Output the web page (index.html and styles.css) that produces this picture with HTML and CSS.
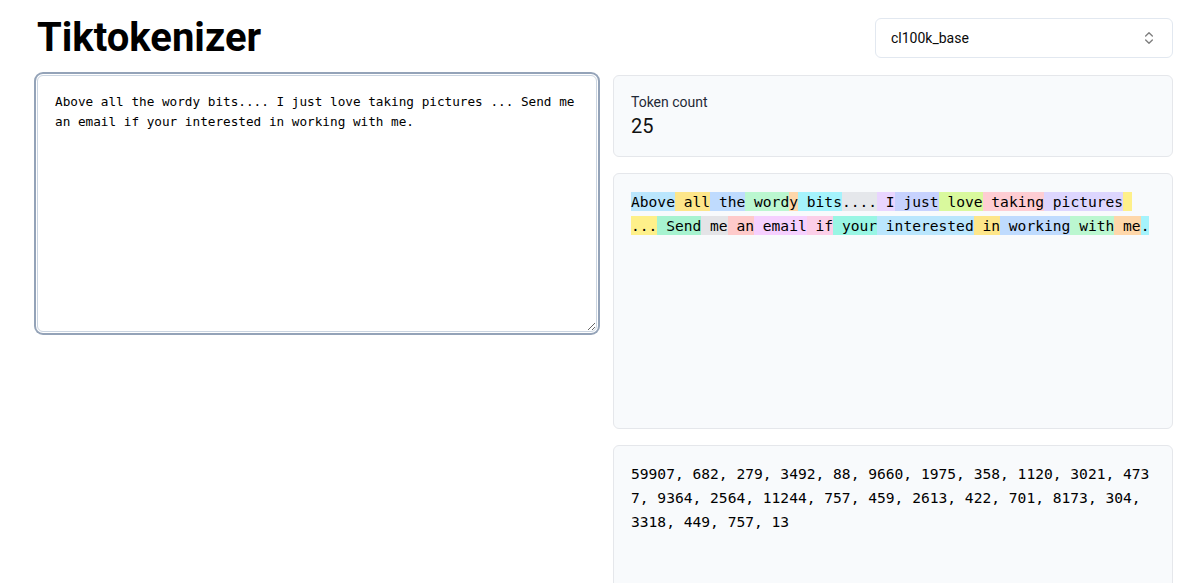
FILE: index.html
```html
<!DOCTYPE html>
<html lang="en">
<head>
<meta charset="utf-8">
<title>Tiktokenizer</title>
<link rel="stylesheet" href="styles.css">
</head>
<body>
<div class="page">
  <header class="header">
    <h1 class="title">Tiktokenizer</h1>
    <div class="select">
      <span>cl100k_base</span>
      <svg class="chev" viewBox="0 0 24 24" fill="none" stroke="currentColor" stroke-width="2" stroke-linecap="round" stroke-linejoin="round"><path d="m7 15 5 5 5-5"/><path d="m7 9 5-5 5 5"/></svg>
    </div>
  </header>
  <main class="main">
    <div class="left">
      <textarea class="input">Above all the wordy bits.... I just love taking pictures ... Send me an email if your interested in working with me.</textarea>
    </div>
    <div class="side">
      <section class="panel">
        <div class="label">Token count</div>
        <div class="count">25</div>
      </section>
      <section class="panel tokens"><span class="t c0">Above</span><span class="t c1"> all</span><span class="t c2"> the</span><span class="t c3"> word</span><span class="t c4">y</span><span class="t c5"> bits</span><span class="t c6">....</span><span class="t c7"> I</span><span class="t c8"> just</span><span class="t c9"> love</span><span class="t c10"> taking</span><span class="t c11"> pictures</span><span class="t c12"> ...</span><span class="t c13"> Send</span><span class="t c14"> me</span><span class="t c15"> an</span><span class="t c16"> email</span><span class="t c17"> if</span><span class="t c18"> your</span><span class="t c0"> interested</span><span class="t c1"> in</span><span class="t c2"> working</span><span class="t c3"> with</span><span class="t c4"> me</span><span class="t c5">.</span></section>
      <section class="panel ids">59907, 682, 279, 3492, 88, 9660, 1975, 358, 1120, 3021, 4737, 9364, 2564, 11244, 757, 459, 2613, 422, 701, 8173, 304, 3318, 449, 757, 13</section>
    </div>
  </main>
</div>
</body>
</html>
```

FILE: styles.css
```css
* { box-sizing: border-box; }
html, body { margin: 0; background: #fff; }
body {
  font-family: Roboto, "Noto Sans", sans-serif;
  color: #0a0a0a;
}
.page {
  height: 100vh;
  overflow: hidden;
  padding: 18px 20px 0 37px;
  display: flex;
  flex-direction: column;
  gap: 17px;
}
.header {
  height: 40px;
  display: flex;
  align-items: center;
  justify-content: space-between;
}
.title {
  margin: 0;
  font-size: 40px;
  line-height: 40px;
  font-weight: 700;
  color: #000;
}
.select {
  width: 298px;
  height: 40px;
  border: 1px solid #e2e8f0;
  border-radius: 6px;
  background: #fff;
  display: flex;
  align-items: center;
  justify-content: space-between;
  padding: 0 15px;
  font-size: 14px;
  color: #0a0a0a;
}
.chev {
  width: 16px;
  height: 16px;
  color: #000;
  opacity: 0.5;
}
.main {
  display: grid;
  grid-template-columns: 1fr 1fr;
  gap: 16px;
  align-items: start;
}
.input {
  display: block;
  width: 100%;
  height: 257px;
  margin: 0;
  border: 1px solid #cbd5e1;
  border-radius: 6px;
  padding: 16px 16px 16px 17px;
  font-family: "DejaVu Sans Mono", monospace;
  font-size: 12.7px;
  line-height: 20px;
  color: #000;
  background: #fff;
  box-shadow: 0 0 0 1px #fff, 0 0 0 3px #94a3b8;
  outline: none;
  resize: vertical;
}
.side {
  display: flex;
  flex-direction: column;
  gap: 16px;
}
.panel {
  border: 1px solid #e5e7eb;
  border-radius: 6px;
  background: #f8fafc;
  padding: 16px 16px 16px 17px;
}
.label {
  font-size: 14px;
  line-height: 20px;
  color: #1f2937;
}
.count {
  font-size: 20px;
  line-height: 28px;
  color: #111;
}
.tokens, .ids {
  height: 256px;
  flex: none;
  font-family: "DejaVu Sans Mono", monospace;
  font-size: 14.6px;
  line-height: 24px;
  color: #000;
}
.tokens { white-space: pre-wrap; }
.ids { word-break: break-all; }
.t { padding: 1px 0; }
.c0 { background: #bae6fd; }
.c1 { background: #fde68a; }
.c2 { background: #bfdbfe; }
.c3 { background: #bbf7d0; }
.c4 { background: #fed7aa; }
.c5 { background: #a5f3fc; }
.c6 { background: #e5e7eb; }
.c7 { background: #e9d5ff; }
.c8 { background: #c7d2fe; }
.c9 { background: #d9f99d; }
.c10 { background: #fecdd3; }
.c11 { background: #ddd6fe; }
.c12 { background: #fef08a; }
.c13 { background: #a7f3d0; }
.c14 { background: #e4e4e7; }
.c15 { background: #fecaca; }
.c16 { background: #f5d0fe; }
.c17 { background: #fbcfe8; }
.c18 { background: #99f6e4; }
```
